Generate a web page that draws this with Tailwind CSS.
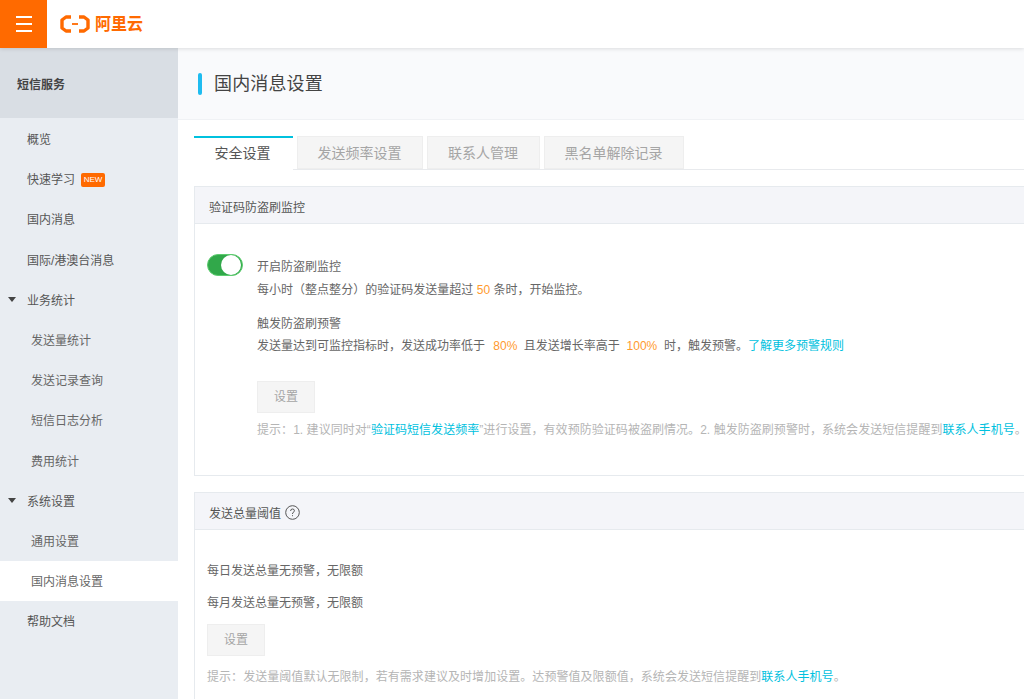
<!DOCTYPE html>
<html lang="zh-CN">
<head>
<meta charset="utf-8">
<title>国内消息设置</title>
<script src="https://cdn.jsdelivr.net/npm/@tailwindcss/browser@4"></script>
</head>
<body class="h-[699px] w-[1024px] overflow-hidden bg-white font-['Liberation_Sans','Noto_Sans_CJK_SC',sans-serif] text-xs text-[#555]">
<header class="relative z-10 flex h-12 items-center bg-white shadow-[0_1px_4px_rgba(0,0,0,0.12)]">
  <div class="flex h-12 w-[47px] flex-col items-center justify-center gap-[5px] bg-[#ff6a00]">
    <span class="h-[2px] w-4 bg-white"></span><span class="h-[2px] w-4 bg-white"></span><span class="h-[2px] w-4 bg-white"></span>
  </div>
  <div class="ml-[13px] flex items-center gap-[5px] text-[#ff6a00]">
    <svg width="30" height="18" viewBox="0 0 30 18" fill="none" stroke="#ff6a00" stroke-width="3.4" stroke-linejoin="round"><path d="M11 2H6L2 5V13L6 16H11"/><path d="M19 2H24L28 5V13L24 16H19"/><path d="M12 9H18" stroke-width="1.8"/></svg>
    <span class="origin-center scale-y-110 text-[16px] leading-none font-bold">阿里云</span>
  </div>
</header>
<div class="flex h-[651px]">
  <aside class="h-full w-[178px] shrink-0 bg-[#e9edf2]">
    <div class="flex h-[70px] items-center bg-[#d9dee4] pt-[3px] pl-[17px] font-bold text-[#444]">短信服务</div>
    <nav class="pt-[2px]">
      <div class="flex h-[40.2px] items-center pl-[27px]">概览</div>
      <div class="flex h-[40.2px] items-center pl-[27px]">快速学习<span class="ml-[6px] flex h-[14px] w-6 items-center justify-center rounded-[2px] bg-[#ff6a00] text-[8px] text-white">NEW</span></div>
      <div class="flex h-[40.2px] items-center pl-[27px]">国内消息</div>
      <div class="flex h-[40.2px] items-center pl-[27px]">国际/港澳台消息</div>
      <div class="flex h-[40.2px] items-center pl-[8px]"><svg class="mr-[11px] mb-[3px]" width="8" height="5" viewBox="0 0 8 5"><path d="M0 0H8L4 5Z" fill="#444"/></svg>业务统计</div>
      <div class="flex h-[40.2px] items-center pl-[31px] text-[#666]">发送量统计</div>
      <div class="flex h-[40.2px] items-center pl-[31px] text-[#666]">发送记录查询</div>
      <div class="flex h-[40.2px] items-center pl-[31px] text-[#666]">短信日志分析</div>
      <div class="flex h-[40.2px] items-center pl-[31px] text-[#666]">费用统计</div>
      <div class="flex h-[40.2px] items-center pl-[8px]"><svg class="mr-[11px] mb-[3px]" width="8" height="5" viewBox="0 0 8 5"><path d="M0 0H8L4 5Z" fill="#444"/></svg>系统设置</div>
      <div class="flex h-[40.2px] items-center pl-[31px] text-[#666]">通用设置</div>
      <div class="-mt-px flex h-[40.2px] items-center bg-white pt-[2px] pl-[31px] text-[#666]">国内消息设置</div>
      <div class="mt-px flex h-[40.2px] items-center pl-[27px]">帮助文档</div>
    </nav>
  </aside>
  <main class="min-w-0 flex-1 overflow-hidden">
    <div class="flex h-[72px] items-center border-b border-[#f0f2f5] bg-[#f9fafc] pl-5">
      <span class="h-[22px] w-1 rounded-sm bg-[#1fbcf0]"></span>
      <h1 class="ml-3 text-[18px] font-normal tracking-[0.15px] text-[#444]">国内消息设置</h1>
    </div>
    <div class="w-[900px] pt-4 pl-4">
      <div class="flex h-[34px] gap-1 border-b border-[#e8eaed] text-sm text-[#a5a5a5]">
        <div class="flex h-[34px] w-[99px] items-center justify-center border-t-2 border-[#00c1de] bg-white pr-[2px] pb-[2px] text-[#555]">安全设置</div>
        <div class="flex h-[33px] w-[126px] items-center justify-center border border-[#eeeeee] bg-[#f5f5f5] pr-px">发送频率设置</div>
        <div class="flex h-[33px] w-[113px] items-center justify-center border border-[#eeeeee] bg-[#f5f5f5] pr-px">联系人管理</div>
        <div class="flex h-[33px] w-[140px] items-center justify-center border border-[#eeeeee] bg-[#f5f5f5] pr-px">黑名单解除记录</div>
      </div>
      <section class="mt-4 h-[290px] border border-[#e6eaee]">
        <div class="flex h-[37px] items-center border-b border-[#e6eaee] bg-[#f4f5f9] pt-[6px] pl-[14px]">验证码防盗刷监控</div>
        <div class="flex pt-[30px] pl-3">
          <div class="flex h-[22px] w-[36px] items-center justify-end rounded-full border border-[#5dcc6f] bg-[#31a84a] pr-px"><span class="h-5 w-5 rounded-full bg-white"></span></div>
          <div class="ml-[14px] whitespace-nowrap text-[#666]">
            <p class="mt-[2px] leading-[22px]">开启防盗刷监控</p>
            <p class="mt-px tracking-[0.02px] leading-[22px]">每小时（整点整分）的验证码发送量超过 <span class="text-[#ff9a2e]">50</span> 条时，开始监控。</p>
            <p class="mt-3 leading-[22px]">触发防盗刷预警</p>
            <p class="leading-[22px]">发送量达到可监控指标时，发送成功率低于 <span class="mr-[3px] ml-[5px] text-[#ff9a2e]">80%</span> 且发送增长率高于 <span class="mx-[3.5px] text-[#ff9a2e]">100%</span> 时，触发预警。<span class="text-[#00c1de]">了解更多预警规则</span></p>
            <button class="mt-[24px] flex h-8 w-[58px] items-center justify-center border border-[#eeeeee] bg-[#f5f5f5] text-[#a5a5a5]">设置</button>
            <p class="mt-[7px] tracking-[0.045px] leading-[20px] text-[#b5b5b5]">提示：1. 建议同时对“<span class="text-[#00c1de]">验证码短信发送频率</span>”进行设置，有效预防验证码被盗刷情况。2. 触发防盗刷预警时，系统会发送短信提醒到<span class="text-[#00c1de]">联系人手机号</span>。</p>
          </div>
        </div>
      </section>
      <section class="mt-4 h-[300px] border border-[#e6eaee]">
        <div class="flex h-[37px] items-center border-b border-[#e6eaee] bg-[#f4f5f9] pt-[5px] pl-[14px]">发送总量阈值
          <svg class="mb-[2px] ml-[4px]" width="15" height="15" viewBox="0 0 15 15" fill="none" stroke="#555"><circle cx="7.5" cy="7.5" r="6.8"/><path d="M5.6 6Q5.6 4 7.5 4T9.4 5.8Q9.4 6.8 8.2 7.4 7.5 7.8 7.5 9"/><path d="M7.5 10.2V11.2"/></svg>
        </div>
        <div class="whitespace-nowrap pt-[30px] pl-3 text-[#666]">
          <p class="leading-[22px]">每日发送总量无预警，无限额</p>
          <p class="mt-[10px] leading-[22px]">每月发送总量无预警，无限额</p>
          <button class="mt-[10px] flex h-8 w-[58px] items-center justify-center border border-[#eeeeee] bg-[#f5f5f5] text-[#a5a5a5]">设置</button>
          <p class="mt-[11px] tracking-[0.05px] leading-[20px] text-[#b5b5b5]">提示：发送量阈值默认无限制，若有需求建议及时增加设置。达预警值及限额值，系统会发送短信提醒到<span class="text-[#00c1de]">联系人手机号</span>。</p>
        </div>
      </section>
    </div>
  </main>
</div>
</body>
</html>
